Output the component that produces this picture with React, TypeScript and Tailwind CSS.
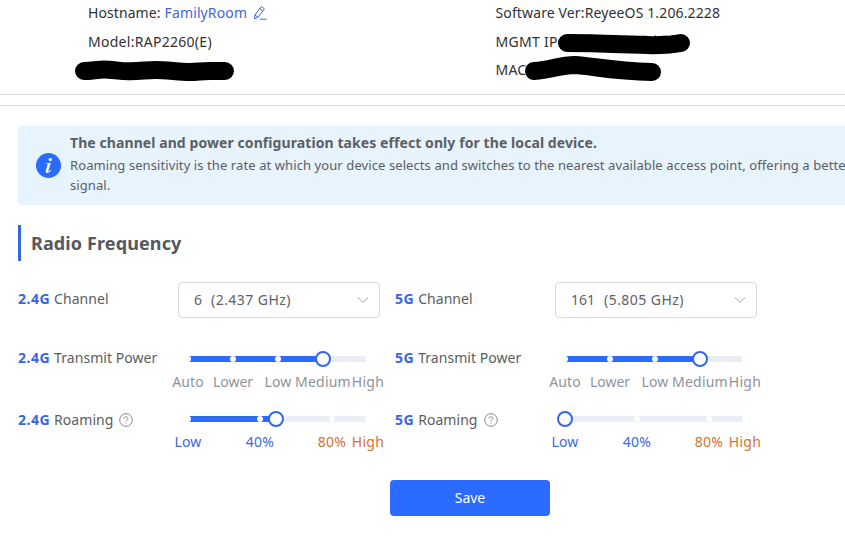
import React from "react";

type Mark = { at: number; label: string; className: string };

const powerMarks: Mark[] = [
  { at: 0, label: "Auto", className: "text-[#909399] tracking-[0.1px]" },
  { at: 25, label: "Lower", className: "text-[#909399]" },
  { at: 50, label: "Low", className: "text-[#909399] tracking-[0.1px]" },
  { at: 75, label: "Medium", className: "text-[#909399] tracking-[0.2px]" },
  { at: 100, label: "High", className: "text-[#909399] tracking-[0.3px]" },
];
const roamingMarks: Mark[] = [
  { at: 0, label: "Low", className: "text-[#3d68e0] tracking-[0.1px]" },
  { at: 40, label: "40%", className: "text-[#3d68e0] tracking-[0.3px]" },
  { at: 80, label: "80%", className: "text-[#d9702f] tracking-[0.3px]" },
  { at: 100, label: "High", className: "text-[#d9702f] tracking-[0.3px]" },
];

function Slider({ value, marks }: { value: number; marks: Mark[] }) {
  return (
    <div className="w-[180px]">
      <div className="relative h-1.5 rounded-[3px] bg-[#e9edf4]">
        <div className="h-1.5 rounded-l-[3px] bg-[#2b6bff]" style={{ width: `${value}%` }} />
        {marks.map((m) => (
          <span
            key={m.at}
            className="absolute top-0 size-1.5 -translate-x-1/2 rounded-full bg-white"
            style={{ left: `${m.at}%` }}
          />
        ))}
        <span
          className="absolute -top-[5px] size-4 -translate-x-1/2 rounded-full border-2 border-[#3268e6] bg-white"
          style={{ left: `${value}%` }}
        />
      </div>
      <div className="relative mt-[10px] h-5">
        {marks.map((m) => (
          <span
            key={m.at}
            className={`absolute top-0 -translate-x-1/2 text-sm leading-5 whitespace-nowrap ${m.className}`}
            style={{ left: `${m.at}%` }}
          >
            {m.label}
          </span>
        ))}
      </div>
    </div>
  );
}

function Help() {
  return (
    <svg className="ml-[6px] size-3.5" viewBox="0 0 14 14" fill="none" stroke="#85888e" strokeWidth="1">
      <circle cx="7" cy="7" r="6.3" />
      <path d="M5 5.7C5 4.5 5.8 3.8 7 3.8s2 .7 2 1.7C9 6.800 7 6.900 7 8.400M7 9.500v1.100" />
    </svg>
  );
}

function Label({ band, text, help }: { band: string; text: string; help?: boolean }) {
  return (
    <div className="flex h-5 items-center text-sm leading-5 whitespace-nowrap text-[#5b5d61]">
      <b className="mr-1 font-bold tracking-[0.5px] text-[#3566e3]">{band}</b>
      <span className="tracking-[0.05px]">{text}</span>
      {help && <Help />}
    </div>
  );
}

function Band({ band, channel, freq, roaming }: { band: string; channel: string; freq: string; roaming: number }) {
  return (
    <div className="w-[377px] shrink-0">
      <div className="flex h-9">
        <div className="w-[160px] pt-[7px]"><Label band={band} text="Channel" /></div>
        <div className="flex w-[202px] items-center rounded border border-[#d8dade] pr-[10px] pl-[15px] text-sm text-[#606266]">
          <span className="mr-[9px]">{channel}</span>
          <span className="tracking-[0.45px]">({freq} GHz)</span>
          <svg className="ml-auto h-3 w-3" viewBox="0 0 12 12" fill="none" stroke="#c0c4cc" strokeWidth="1.1">
            <path d="M1 3.500l5 5 5-5" />
          </svg>
        </div>
      </div>
      <div className="mt-[30px] flex h-[62px]">
        <div className="w-[170px]"><Label band={band} text="Transmit Power" /></div>
        <div className="pt-2"><Slider value={75} marks={powerMarks} /></div>
      </div>
      <div className="flex">
        <div className="w-[170px]"><Label band={band} text="Roaming" help /></div>
        <div className="pt-1.5"><Slider value={roaming} marks={roamingMarks} /></div>
      </div>
    </div>
  );
}

export default function App() {
  return (
    <div className="relative h-[538px] w-[845px] overflow-hidden bg-white font-['Noto_Sans','Open_Sans',sans-serif]">
      <header className="flex h-[95px] border-b border-[#d9d9d9] pt-[3px] pl-[88px] text-sm leading-5 text-[#303133]">
        <div className="flex w-[407.500px] flex-col gap-[9px]">
          <div className="flex items-center">
            <span className="tracking-[0.08px]">Hostname:</span>
            <span className="ml-1 tracking-[0.12px] text-[#4267d5]">FamilyRoom</span>
            <svg className="ml-1.5 size-3.5" viewBox="0 0 14 14" fill="none" stroke="#4267d5" strokeWidth="1">
              <path d="M1.500 12.800l.4-3.700L7.800 1.200q.6-.7 1.300-.2l1.700 1.300q.7.6.1 1.300L5 11.300zM6.700 2.700l2.900 2.300M2 9.100l2.900 2.200M7 13.200h6.500" />
            </svg>
          </div>
          <div className="tracking-[0.28px]">Model:RAP2260(E)</div>
        </div>
        <div className="flex flex-col gap-[8.500px]">
          <div className="tracking-[0.13px]">Software Ver:ReyeeOS 1.206.2228</div>
          <div className="tracking-[0.28px]">MGMT IP</div>
          <div className="tracking-[0.2px]">MAC</div>
        </div>
      </header>
      <svg className="absolute top-0 left-0 h-[95px] w-[845px]" viewBox="0 0 845 95" fill="none" stroke="#000" strokeWidth="18" strokeLinecap="round" strokeLinejoin="round">
        <path d="M642 36.500h5M655 35.500v2M662 36.500h6" stroke="#2a2ad0" strokeWidth="1.500" strokeLinecap="butt" />
        <path d="M84 71C92 71 97 69.500 104 69.500C113 69.500 120 71.500 130 71.300C141 71.200 147 70 155 70C167 70 179 72 190 72C197 72 202 71 210 71L225 71" />
        <path d="M567 43C610 43 640 46 661 45C674 45 678 43 681 43" />
        <path d="M534 71C552 70 559 65 575 65C592 66 613 71 652 72" />
      </svg>
      <div className="mt-[10px] border-t border-[#d9d9d9]" />
      <main className="pt-5 pl-[18px]">
        <section className="flex h-[79px] w-[880px] items-center rounded bg-[#e7f3fd] pl-[18px]">
          <svg className="size-[25px] shrink-0" viewBox="0 0 24 24">
            <circle cx="12" cy="12" r="12" fill="#2b6bff" />
            <circle cx="13.700" cy="6.300" r="1.600" fill="#fff" />
            <path d="M9 10.300l5.200-1-2.300 7.700q-.2 1 .6.500l1.500-1.500.5.500q-2.200 3.200-4.200 2.700-1.400-.4-.9-2.200l1.700-5.700q.2-.7-.5-.7H9z" fill="#fff" />
          </svg>
          <div className="-mt-1 ml-[9px] whitespace-nowrap text-[#5b6064]">
            <div className="mb-[2px] text-sm leading-5 font-bold tracking-[0.08px]">The channel and power configuration takes effect only for the local device.</div>
            <div className="text-[13px] leading-5 tracking-[0.09px]">
              Roaming sensitivity is the rate at which your device selects and switches to the nearest available access point, offering a better<br />signal.
            </div>
          </div>
        </section>
        <h2 className="mt-5 flex h-9 items-center border-l-3 border-[#3566e3] pl-[10px] text-lg font-bold tracking-[0.12px] text-[#56585c]">Radio Frequency</h2>
        <section className="mt-[21px] flex">
          <Band band="2.4G" channel="6" freq="2.437" roaming={49} />
          <Band band="5G" channel="161" freq="5.805" roaming={0} />
        </section>
        <button className="mt-7 ml-[372px] block h-9 w-40 rounded bg-[#2b6bff] pb-px text-sm text-white">Save</button>
      </main>
    </div>
  );
}
